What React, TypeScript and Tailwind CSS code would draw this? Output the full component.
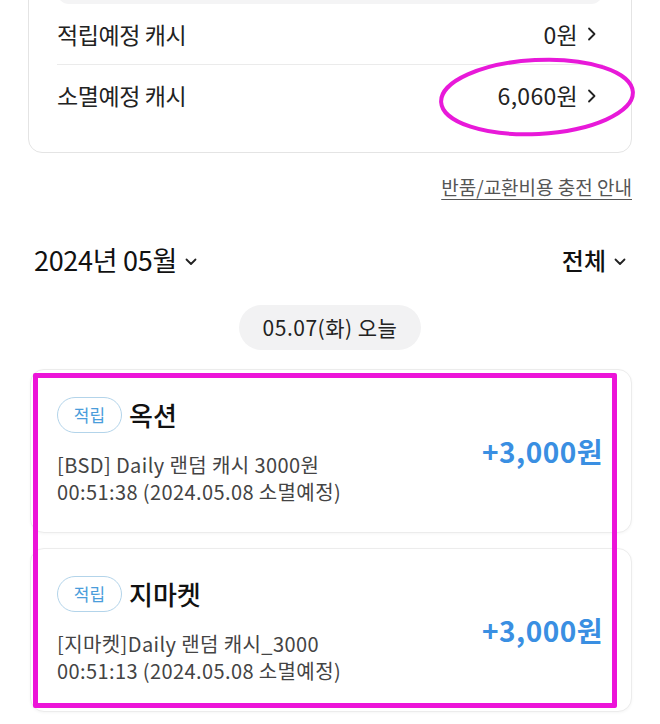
import React from "react";

const FONT = { fontFamily: '"Noto Sans CJK KR", "Noto Sans", sans-serif' };

const ChevronRight = () => (
  <svg width="10" height="16" viewBox="0 0 10 16" className="ml-[9px]">
    <path d="M2 2.5 L7.5 8 L2 13.5" fill="none" stroke="#222" strokeWidth="1.8" strokeLinecap="round" strokeLinejoin="round" />
  </svg>
);

const ChevronDown = () => (
  <svg width="12" height="8" viewBox="0 0 12 8" className="ml-[8px] mt-[4px]">
    <path d="M1.5 1.5 L6 6 L10.5 1.5" fill="none" stroke="#222" strokeWidth="1.8" strokeLinecap="round" strokeLinejoin="round" />
  </svg>
);

const CashRow = ({ label, value, last }: { label: string; value: string; last?: boolean }) => (
  <div className={`flex items-center justify-between h-[61px] ${last ? "" : "border-b border-[#ebebeb]"}`}>
    <span className="text-[23px] text-[#222] tracking-[-0.4px]">{label}</span>
    <span className="flex items-center text-[23px] text-[#222] tracking-[0.3px] mr-[6px]">
      {value}
      <ChevronRight />
    </span>
  </div>
);

const HistoryCard = ({ shop, lines }: { shop: string; lines: string[] }) => (
  <div className="ml-[30px] mr-[28px] rounded-[14px] border border-[#ececec] bg-white shadow-[0_1px_3px_rgba(0,0,0,0.04)] pl-[26px] pr-[28px] pt-[27px] pb-[27px] flex items-center justify-between">
    <div>
      <div className="flex items-center">
        <span className="h-[36px] w-[65px] rounded-full border border-[#b3d4ea] text-[#4a9ddb] text-[17px] flex items-center justify-center">
          적립
        </span>
        <span className="ml-[7px] text-[26px] leading-[36px] font-medium text-[#111]">{shop}</span>
      </div>
      <div className="mt-[18px] text-[20px] leading-[27px] text-[#444] tracking-[0.4px]">
        {lines.map((l, i) => (
          <p key={i}>{l}</p>
        ))}
      </div>
    </div>
    <span className="text-[28px] font-bold text-[#3a8fe2] tracking-[0.5px]">+3,000원</span>
  </div>
);

export default function App() {
  return (
    <div className="relative w-[660px] h-[724px] overflow-hidden bg-white" style={FONT}>
      {/* cash summary card */}
      <div className="mx-[28px] -mt-[54px] rounded-[14px] border border-[#e4e4e4] bg-white px-[28px] pt-[12px] pb-[26px]">
        <div className="h-[45px] rounded-[12px] bg-[#f4f4f5]" />
        <CashRow label="적립예정 캐시" value="0원" />
        <CashRow label="소멸예정 캐시" value="6,060원" last />
      </div>

      <div className="flex justify-end pr-[28px] mt-[20px]">
        <span className="text-[19px] text-[#555] underline underline-offset-[4px]">반품/교환비용 충전 안내</span>
      </div>

      <div className="flex items-center justify-between pl-[34px] pr-[34px] mt-[38px]">
        <span className="flex items-center text-[27px] text-[#111] tracking-[-0.3px]">
          2024년 05월
          <ChevronDown />
        </span>
        <span className="flex items-center text-[24px] text-[#111] font-medium">
          전체
          <ChevronDown />
        </span>
      </div>

      <div className="flex justify-center mt-[25px]">
        <span className="h-[45px] px-[24px] rounded-full bg-[#f2f2f3] flex items-center text-[21px] text-[#222] tracking-[0.5px]">
          05.07(화) 오늘
        </span>
      </div>

      <div className="mt-[19px] flex flex-col gap-[15px]">
        <HistoryCard shop="옥션" lines={["[BSD] Daily 랜덤 캐시 3000원", "00:51:38 (2024.05.08 소멸예정)"]} />
        <HistoryCard shop="지마켓" lines={["[지마켓]Daily 랜덤 캐시_3000", "00:51:13 (2024.05.08 소멸예정)"]} />
      </div>

      {/* annotation marks drawn over the screenshot */}
      <svg className="absolute left-[436px] top-[57px]" width="204" height="86" viewBox="0 0 204 86">
        <ellipse cx="101" cy="40" rx="96" ry="37" fill="none" stroke="#e819d9" strokeWidth="4" transform="rotate(-3 101 40)" />
      </svg>
      <div className="absolute left-[33px] top-[373px] w-[584px] h-[335px] border-[5px] border-[#ec14d8] rounded-[2px]" />
    </div>
  );
}
